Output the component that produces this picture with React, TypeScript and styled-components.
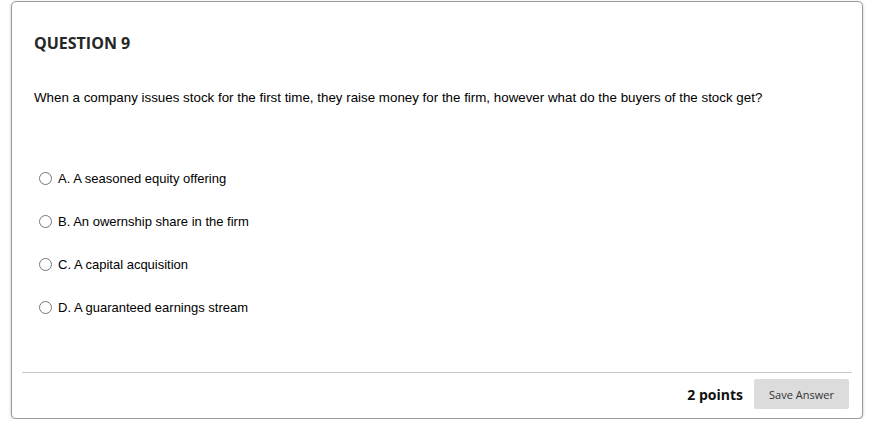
import React from 'react';
import styled, { createGlobalStyle } from 'styled-components';

const GlobalStyle = createGlobalStyle`
  body {
    margin: 0;
    background: #ffffff;
    font-family: Arial, "Liberation Sans", sans-serif;
  }
`;

const Page = styled.div`
  padding: 1px 14px 0 11px;
`;

const Card = styled.section`
  border: 1px solid #9a9a9a;
  border-radius: 5px;
  box-shadow: 0 1px 3px rgba(0, 0, 0, 0.25);
  background: #fff;
  height: 418px;
  box-sizing: border-box;
  display: flex;
  flex-direction: column;
  padding: 0 10px 0 10px;
`;

const Heading = styled.h2`
  margin: 30px 0 0 12px;
  font-family: 'Open Sans', sans-serif;
  font-weight: 700;
  font-size: 16px;
  line-height: 22px;
  color: #262626;
`;

const Prompt = styled.p`
  margin: 35px 0 0 12px;
  font-size: 13.35px;
  line-height: 17px;
  color: #000;
`;

const Options = styled.div`
  margin: 64px 0 0 17px;
  display: flex;
  flex-direction: column;
  gap: 27px;
`;

const Option = styled.label`
  display: flex;
  align-items: center;
  gap: 6px;
  height: 16px;
  font-size: 13px;
  color: #000;
`;

const Radio = styled.span`
  width: 11px;
  height: 11px;
  border: 1px solid #767676;
  border-radius: 50%;
  background: #fff;
  flex-shrink: 0;
`;

const Footer = styled.div`
  margin-top: auto;
  border-top: 1px solid #c9c9c9;
  display: flex;
  justify-content: flex-end;
  align-items: center;
  gap: 11px;
  padding: 6px 3px 9px 0;
`;

const Points = styled.span`
  font-family: 'Open Sans', sans-serif;
  font-weight: 700;
  font-size: 14px;
  color: #111;
`;

const SaveButton = styled.button`
  width: 95px;
  height: 30px;
  border: none;
  border-radius: 2px;
  background: #dcdcdc;
  font-family: 'Open Sans', sans-serif;
  font-size: 11px;
  color: #333;
  padding: 0;
`;

const answers = [
  'A. A seasoned equity offering',
  'B. An owernship share in the firm',
  'C. A capital acquisition',
  'D. A guaranteed earnings stream',
];

const App = () => (
  <Page>
    <GlobalStyle />
    <Card>
      <Heading>QUESTION 9</Heading>
      <Prompt>
        When a company issues stock for the first time, they raise money for the firm, however what do the buyers of the stock get?
      </Prompt>
      <Options>
        {answers.map((a) => (
          <Option key={a}>
            <Radio />
            {a}
          </Option>
        ))}
      </Options>
      <Footer>
        <Points>2 points</Points>
        <SaveButton>Save Answer</SaveButton>
      </Footer>
    </Card>
  </Page>
);

export default App;
